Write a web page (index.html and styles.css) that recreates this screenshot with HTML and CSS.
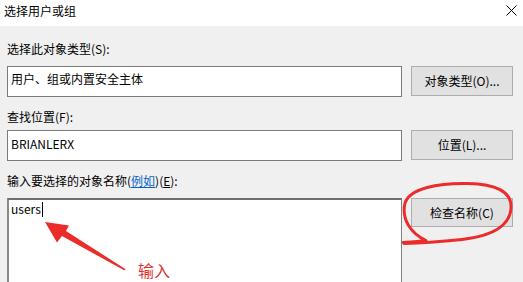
FILE: index.html
```html
<!DOCTYPE html>
<html lang="zh-CN">
<head>
<meta charset="utf-8">
<title>选择用户或组</title>
<link rel="stylesheet" href="styles.css">
</head>
<body>
<div class="window">
  <div class="titlebar">
    <span class="title">选择用户或组</span>
    <svg class="close" width="11" height="11" viewBox="0 0 11 11"><path d="M0.5 0.5 L10.5 10.5 M10.5 0.5 L0.5 10.5" stroke="#000" stroke-width="1" fill="none"/></svg>
  </div>
  <div class="content">
    <div class="label l1">选择此对象类型(S):</div>
    <div class="row">
      <div class="field f1">用户、组或内置安全主体</div>
      <div class="btn">对象类型(O)...</div>
    </div>
    <div class="label l2">查找位置(F):</div>
    <div class="row">
      <div class="field f2">BRIANLERX</div>
      <div class="btn">位置(L)...</div>
    </div>
    <div class="label l3">输入要选择的对象名称(<span class="link">例如</span>)(<u>E</u>):</div>
    <div class="row top">
      <div class="field area">users<span class="caret"></span></div>
      <div class="btn b3">检查名称(C)</div>
    </div>
  </div>
  <svg class="annot" width="523" height="282" viewBox="0 0 523 282">
    <polygon points="45,222 69,225.5 66,231 125.6,269.2 124.6,270.6 62,236 57,242.5" fill="#ec2b2b"/>
    <path d="M403,242.5 C412,242 420,241.5 426,240.5 C412,234 401,220 405,203 C410,188 438,183 468,183.5 C495,184 512,191 511,208 C510,226 492,236 462,239.5 C442,241.5 424,243 404,243.5" fill="none" stroke="#ec2b2b" stroke-width="3" stroke-linecap="round" stroke-linejoin="round"/>
  </svg>
  <div class="note">输入</div>
</div>
</body>
</html>
```

FILE: styles.css
```css
html, body {
  margin: 0;
  padding: 0;
}
body {
  width: 523px;
  height: 282px;
  overflow: hidden;
  font-family: "Noto Sans CJK SC", "Noto Sans", sans-serif;
  font-size: 12px;
  color: #000;
  background: #f0f0f0;
}
.window {
  position: relative;
  width: 523px;
  height: 282px;
  overflow: hidden;
}
.titlebar {
  height: 26px;
  background: #fff;
  display: flex;
  align-items: center;
  justify-content: space-between;
  padding: 0 6px 0 4px;
  box-sizing: border-box;
}
.title {
  font-size: 12px;
  line-height: 16px;
  margin-top: -4px;
}
.close {
  margin-top: -5px;
}
.content {
  padding: 0 10px 0 7px;
  display: flex;
  flex-direction: column;
}
.label {
  line-height: 18px;
  height: 18px;
}
.l1 { margin-top: 14px; margin-bottom: 8px; }
.l2 { margin-top: 11px; margin-bottom: 4px; }
.l3 { margin-top: 11px; margin-bottom: 8px; }
.link {
  color: #0066cc;
  text-decoration: underline;
}
.row {
  display: flex;
  gap: 9px;
  align-items: flex-start;
}
.field {
  width: 395px;
  height: 31px;
  box-sizing: border-box;
  background: #fff;
  border: 1px solid #7a7a7a;
  padding: 3px 3px;
  line-height: 18px;
}
.f2 {
  padding-top: 4px;
}
.area {
  height: 90px;
  border-color: #828282;
  border-top: 2px solid #6e6e6e;
  border-left: 2px solid #8a8a8a;
  padding: 0 2px;
  line-height: 18px;
}
.caret {
  display: inline-block;
  width: 1px;
  height: 15px;
  background: #000;
  vertical-align: -3px;
  margin-left: 1px;
}
.btn {
  width: 102px;
  height: 30px;
  box-sizing: border-box;
  background: #e1e1e1;
  border: 1px solid #adadad;
  display: flex;
  align-items: center;
  justify-content: center;
  line-height: 18px;
}
.b3 {
  height: 29px;
}
.annot {
  position: absolute;
  left: 0;
  top: 0;
  pointer-events: none;
}
.note {
  position: absolute;
  left: 138px;
  top: 259px;
  font-size: 16px;
  line-height: 22px;
  color: #e0322d;
}
```
